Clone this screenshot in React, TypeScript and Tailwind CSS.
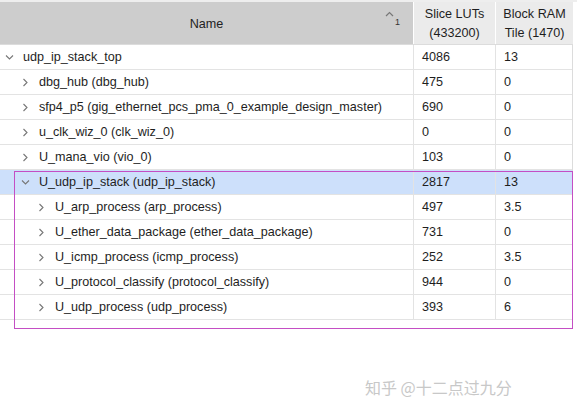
import React from 'react';

type Row = { name: string; luts: string; bram: string; level: number; open?: boolean; selected?: boolean };

const top: Row[] = [
  { name: 'udp_ip_stack_top', luts: '4086', bram: '13', level: 0, open: true },
  { name: 'dbg_hub (dbg_hub)', luts: '475', bram: '0', level: 1 },
  { name: 'sfp4_p5 (gig_ethernet_pcs_pma_0_example_design_master)', luts: '690', bram: '0', level: 1 },
  { name: 'u_clk_wiz_0 (clk_wiz_0)', luts: '0', bram: '0', level: 1 },
  { name: 'U_mana_vio (vio_0)', luts: '103', bram: '0', level: 1 },
];

const stack: Row[] = [
  { name: 'U_udp_ip_stack (udp_ip_stack)', luts: '2817', bram: '13', level: 1, open: true, selected: true },
  { name: 'U_arp_process (arp_process)', luts: '497', bram: '3.5', level: 2 },
  { name: 'U_ether_data_package (ether_data_package)', luts: '731', bram: '0', level: 2 },
  { name: 'U_icmp_process (icmp_process)', luts: '252', bram: '3.5', level: 2 },
  { name: 'U_protocol_classify (protocol_classify)', luts: '944', bram: '0', level: 2 },
  { name: 'U_udp_process (udp_process)', luts: '393', bram: '6', level: 2 },
];

function Chevron({ open }: { open?: boolean }) {
  return (
    <svg width="9" height="9" viewBox="0 0 9 9" className="shrink-0">
      {open ? (
        <path d="M1 2.5 L4.5 6 L8 2.5" fill="none" stroke="#777" strokeWidth="1.1" />
      ) : (
        <path d="M2.5 1 L6 4.5 L2.5 8" fill="none" stroke="#777" strokeWidth="1.1" />
      )}
    </svg>
  );
}

function TableRow({ r }: { r: Row }) {
  const pad = r.level === 0 ? 'pl-[5px]' : r.level === 1 ? 'pl-[21px]' : 'pl-[37px]';
  return (
    <div className={`grid grid-cols-[413px_82px_78px] h-[25px] border-b border-[#e3e3e3] ${r.selected ? 'bg-[#cde0fb]' : ''}`}>
      <div className={`flex items-center gap-[9px] pt-px ${pad} whitespace-nowrap overflow-hidden`}>
        <Chevron open={r.open} />
        <span>{r.name}</span>
      </div>
      <div className="flex items-center pt-px pl-[8px] border-l border-[#e3e3e3]">{r.luts}</div>
      <div className="flex items-center pt-px pl-[8px] border-l border-[#e3e3e3]">{r.bram}</div>
    </div>
  );
}

export default function App() {
  return (
    <div
      className="w-[577px] h-[411px] bg-white text-[12.6px] text-[#1e1e1e] relative overflow-hidden"
      style={{ fontFamily: '"Liberation Sans", Arial, sans-serif' }}
    >
      <div className="h-[2px] bg-[#eeeeee]" />
      <div className="w-[573px] border-r border-[#dcdcdc]">
        {/* Header */}
        <div className="grid grid-cols-[413px_82px_78px] h-[43px] border-b border-[#dcdcdc]">
          <div className="relative bg-[#cdcdcd] flex items-center justify-center pt-[3px] text-[#222]">
            Name
            <svg width="9" height="6" viewBox="0 0 9 6" className="absolute left-[385px] top-[9px]">
              <path d="M1 5 L4.5 1.5 L8 5" fill="none" stroke="#777" strokeWidth="1.2" />
            </svg>
            <span className="absolute left-[395px] top-[14px] text-[9px] text-[#333]">1</span>
          </div>
          <div className="bg-[#ebebeb] border-l border-white flex flex-col items-center justify-center pt-px leading-[19px]">
            <span>Slice LUTs</span>
            <span>(433200)</span>
          </div>
          <div className="bg-[#ebebeb] border-l border-white flex flex-col items-center justify-center pt-px leading-[19px]">
            <span>Block RAM</span>
            <span>Tile (1470)</span>
          </div>
        </div>

        {top.map((r) => (
          <TableRow key={r.name} r={r} />
        ))}

        <div className="relative">
          {stack.map((r) => (
            <div key={r.name} className={r.selected ? 'pl-[15px]' : ''}>
              <div className={r.selected ? '-ml-[15px]' : ''}>
                <TableRow r={r} />
              </div>
            </div>
          ))}
          <div className="absolute left-[14px] top-[1px] w-[559px] h-[158px] border border-[#c44ec4] pointer-events-none" />
        </div>
      </div>

      <div
        className="absolute left-[365px] top-[375px] text-[16px] text-[#c8c8c8]"
        style={{ fontFamily: '"Noto Sans CJK SC", "Noto Sans", sans-serif' }}
      >
        知乎 @十二点过九分
      </div>
    </div>
  );
}
